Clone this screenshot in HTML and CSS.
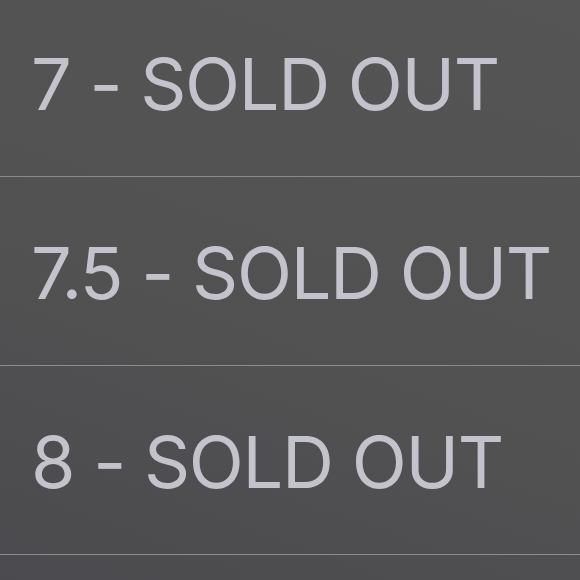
FILE: index.html
```html
<!DOCTYPE html>
<html>
<head>
<meta charset="utf-8">
<link rel="stylesheet" href="styles.css">
</head>
<body>
<ul class="list">
  <li class="row"><span class="label">7 - SOLD OUT</span></li>
  <li class="row"><span class="label">7.5 - SOLD OUT</span></li>
  <li class="row"><span class="label">8 - SOLD OUT</span></li>
</ul>
</body>
</html>
```
FILE: styles.css
```css
html, body {
  margin: 0;
  padding: 0;
  height: 100%;
  overflow: hidden;
}
body {
  background: linear-gradient(20deg, #4b4b4f 0%, #515152 40%, #555555 100%);
  font-family: Inter, "Noto Sans", sans-serif;
}
.list {
  list-style: none;
  margin: -12px 0 0 0;
  padding: 0;
}
.row {
  height: 189px;
  box-sizing: border-box;
  border-bottom: 1px solid #8c8c8e;
  display: flex;
  align-items: center;
  padding: 3px 0 0 31px;
}
.label {
  color: #c3c3cb;
  font-size: 72px;
  font-weight: 400;
  letter-spacing: -1.3px;
  line-height: 1;
}
```
